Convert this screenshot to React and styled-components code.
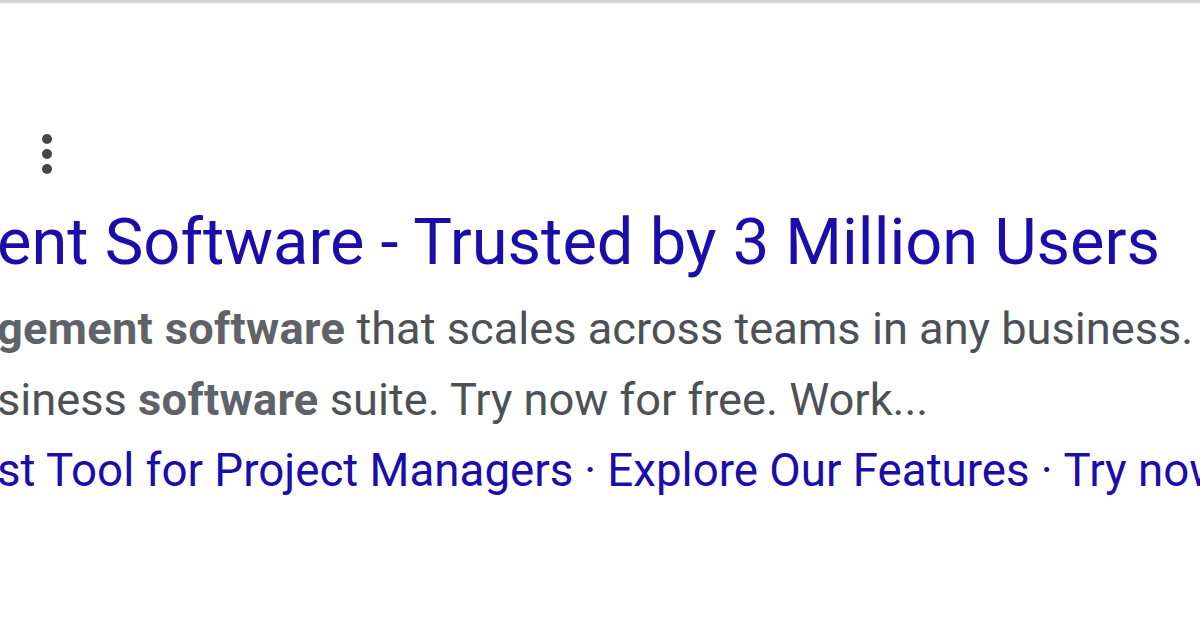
import React from "react";
import styled, { createGlobalStyle } from "styled-components";

const GlobalStyle = createGlobalStyle`
  html, body {
    margin: 0;
    padding: 0;
    background: #fff;
  }
  body {
    font-family: Roboto, "Liberation Sans", Arial, sans-serif;
    -webkit-font-smoothing: antialiased;
  }
`;

const Page = styled.div`
  width: 1200px;
  height: 628px;
  overflow: hidden;
  background: #fff;
  display: flex;
  flex-direction: column;
`;

const TopEdge = styled.div`
  height: 4px;
  flex-shrink: 0;
  background: linear-gradient(#cfcfcf, #dcdcdc 60%, #f4f4f4);
`;

const Ad = styled.div`
  display: flex;
  flex-direction: column;
  margin-left: -3px;
  padding-top: 129px;
`;

const MenuRow = styled.div`
  display: flex;
  padding-left: 44px;
  height: 58px;
  align-items: flex-start;
`;

const Kebab = styled.button`
  border: 0;
  background: none;
  padding: 0;
  display: flex;
  cursor: pointer;
`;

const Title = styled.div`
  font-size: 65px;
  line-height: 102px;
  color: #1a0dab;
  white-space: nowrap;
`;

const Line = styled.div`
  font-size: 45.2px;
  line-height: 71px;
  color: #4d5156;
  white-space: nowrap;
`;

const Em = styled.b`
  font-weight: 700;
  color: #5f6368;
  letter-spacing: 0.3px;
`;

const Links = styled.div`
  display: flex;
  font-size: 45.7px;
  line-height: 71px;
  color: #1a0dab;
  white-space: nowrap;
`;

const Sep = styled.span`
  padding: 0 11px;
`;

function DotsIcon() {
  return (
    <svg width="12" height="42" viewBox="0 0 12 42">
      <circle cx="6" cy="6" r="5" fill="#474747" />
      <circle cx="6" cy="21" r="5" fill="#474747" />
      <circle cx="6" cy="36" r="5" fill="#474747" />
    </svg>
  );
}

const sitelinks = ["st Tool for Project Managers", "Explore Our Features", "Try now"];

export default function App() {
  return (
    <>
      <GlobalStyle />
      <Page>
        <TopEdge />
        <Ad>
          <MenuRow>
            <Kebab aria-label="Why this ad?">
              <DotsIcon />
            </Kebab>
          </MenuRow>
          <Title>ent Software - Trusted by 3 Million Users</Title>
          <Line>
            <Em>gement software</Em> that scales across teams in any business.
          </Line>
          <Line>
            siness <Em>software</Em> suite. Try now for free. Work...
          </Line>
          <Links>
            {sitelinks.map((s, i) => (
              <React.Fragment key={s}>
                {i > 0 && <Sep>·</Sep>}
                <span>{s}</span>
              </React.Fragment>
            ))}
          </Links>
        </Ad>
      </Page>
    </>
  );
}
